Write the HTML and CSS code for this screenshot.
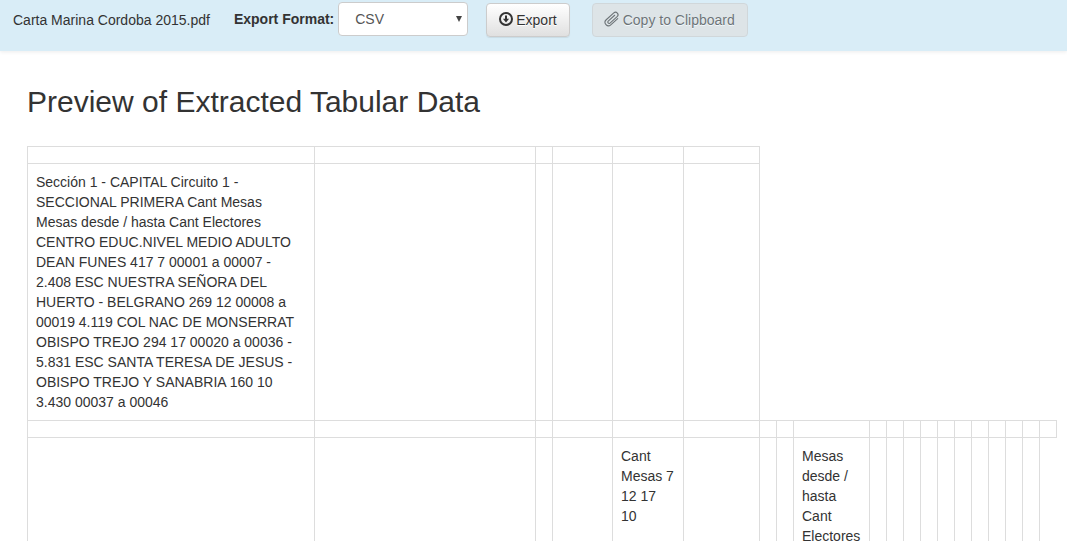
FILE: index.html
```html
<!DOCTYPE html>
<html lang="en">
<head>
<meta charset="utf-8">
<title>Preview of Extracted Tabular Data</title>
<link rel="stylesheet" href="styles.css">
</head>
<body>
<header class="toolbar">
  <span class="filename">Carta Marina Cordoba 2015.pdf</span>
  <div class="format">
    <label class="format-label" for="format">Export Format:</label>
    <div class="select-wrap">
      <select class="format-select" id="format"><option>CSV</option></select>
      <svg class="arrow" viewBox="0 0 6 6" aria-hidden="true"><path d="M0 0h6L3 6z" fill="#444"/></svg>
    </div>
  </div>
  <button class="btn" type="button">
    <svg class="icon" viewBox="0 0 14 14" aria-hidden="true"><circle cx="7" cy="7" r="6" fill="none" stroke="currentColor" stroke-width="2"/><path d="M6 3.400h2v3.300h2.100L7 10.600 3.900 6.700H6z" fill="currentColor"/></svg>
    <span>Export</span>
  </button>
  <button class="btn btn-copy" type="button" disabled>
    <svg class="icon icon-clip" viewBox="0 0 16 14" aria-hidden="true"><path transform="translate(8 7) rotate(-42)" d="M4.500 3.500H-4.800a3.400 3.400 0 0 1 0-6.800H5.400a2.500 2.500 0 0 1 0 5H-4.200a1.350 1.350 0 0 1 0-2.700H4.500" fill="none" stroke="currentColor" stroke-width="1.100" stroke-linecap="round"/></svg>
    <span>Copy to Clipboard</span>
  </button>
</header>
<main class="content">
  <h1 class="title">Preview of Extracted Tabular Data</h1>
  <table class="data">
    <colgroup>
      <col class="col-section"><col><col class="col-empty"><col class="col-small"><col class="col-count"><col class="col-range">
      <col class="col-empty" span="2"><col class="col-range"><col class="col-empty" span="11">
    </colgroup>
    <tbody>
      <tr><td></td><td></td><td></td><td></td><td></td><td></td></tr>
      <tr><td>Sección 1 - CAPITAL Circuito 1 - SECCIONAL PRIMERA Cant Mesas Mesas desde / hasta Cant Electores CENTRO EDUC.NIVEL MEDIO ADULTO DEAN FUNES 417 7 00001 a 00007 - 2.408 ESC NUESTRA SEÑORA DEL HUERTO - BELGRANO 269 12 00008 a 00019 4.119 COL NAC DE MONSERRAT OBISPO TREJO 294 17 00020 a 00036 - 5.831 ESC SANTA TERESA DE JESUS - OBISPO TREJO Y SANABRIA 160 10 3.430 00037 a 00046</td><td></td><td></td><td></td><td></td><td></td></tr>
      <tr><td></td><td></td><td></td><td></td><td></td><td></td><td></td><td></td><td></td><td></td><td></td><td></td><td></td><td></td><td></td><td></td><td></td><td></td><td></td><td></td></tr>
      <tr><td></td><td></td><td></td><td></td><td>Cant Mesas 7 12 17 10</td><td></td><td></td><td></td><td>Mesas desde / hasta Cant Electores</td><td></td><td></td><td></td><td></td><td></td><td></td><td></td><td></td><td></td><td></td></tr>
    </tbody>
  </table>
</main>
</body>
</html>
```
FILE: styles.css
```css
* {
  box-sizing: border-box;
}

body {
  margin: 0;
  background: #fff;
  color: #333;
  font: 14px/20px "Liberation Sans", Arial, sans-serif;
}

.toolbar {
  display: flex;
  align-items: flex-start;
  padding: 3px 13px 14px;
  background: #d9edf7;
  box-shadow: 0 1px 4px rgba(0, 0, 0, 0.08);
}

.filename {
  margin-right: 24px;
  padding-top: 7px;
}

.format {
  display: flex;
  align-items: center;
  gap: 4px;
  margin: -1px 18px 0 0;
}

.format-label {
  font-weight: bold;
}

.select-wrap {
  display: grid;
  align-items: center;
  width: 130px;
}

.format-select {
  grid-area: 1 / 1;
  width: 100%;
  height: 34px;
  padding: 6px 16px;
  border: 1px solid #ccc;
  border-radius: 4px;
  background: #fff;
  color: #555;
  font: inherit;
  appearance: none;
}

.arrow {
  grid-area: 1 / 1;
  justify-self: end;
  width: 6px;
  height: 6px;
  margin-right: 6px;
  pointer-events: none;
}

.btn {
  display: flex;
  align-items: center;
  gap: 3px;
  height: 34px;
  padding: 0 12px;
  border: 1px solid #ccc;
  border-radius: 4px;
  background: linear-gradient(#fff, #e0e0e0);
  box-shadow: inset 0 1px 0 rgba(255, 255, 255, 0.15), 0 1px 1px rgba(0, 0, 0, 0.075);
  color: #333;
  font: inherit;
  text-shadow: 0 1px 0 #fff;
}

.btn-copy {
  margin-left: 22px;
  padding: 0 12px 0 11px;
  background: #e0e0e0;
  box-shadow: none;
  opacity: 0.65;
}

.icon {
  width: 14px;
  height: 14px;
  margin-bottom: 2px;
}

.icon-clip {
  width: 16px;
  overflow: visible;
}

.content {
  padding: 31px 10px 0 27px;
}

.title {
  margin: 0 0 24px;
  font-size: 30px;
  font-weight: normal;
  line-height: 40px;
}

.data {
  width: 100%;
  border-collapse: collapse;
  table-layout: fixed;
}

.data td {
  padding: 8px;
  border: 1px solid #ddd;
  vertical-align: top;
}

.col-section {
  width: 287px;
}

.col-empty {
  width: 17px;
}

.col-small {
  width: 60px;
}

.col-count {
  width: 71px;
}

.col-range {
  width: 76px;
}
```
